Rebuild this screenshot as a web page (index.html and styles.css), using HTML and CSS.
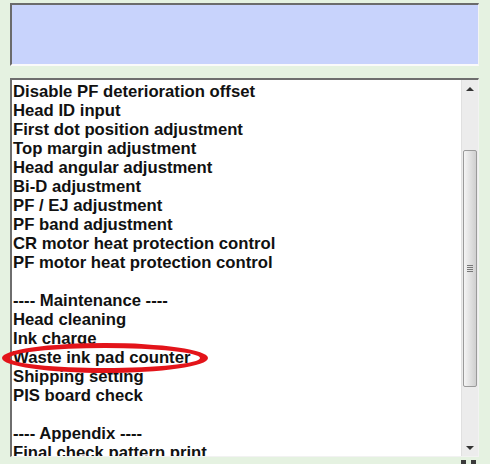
FILE: index.html
```html
<!DOCTYPE html>
<html>
<head>
<meta charset="utf-8">
<link rel="stylesheet" href="styles.css">
</head>
<body>
<div class="panel">
  <div class="status-box"></div>
  <div class="list-box">
    <ul class="items">
      <li>Disable PF deterioration offset</li>
      <li>Head ID input</li>
      <li>First dot position adjustment</li>
      <li>Top margin adjustment</li>
      <li>Head angular adjustment</li>
      <li>Bi-D adjustment</li>
      <li>PF / EJ adjustment</li>
      <li>PF band adjustment</li>
      <li>CR motor heat protection control</li>
      <li>PF motor heat protection control</li>
      <li class="blank">&nbsp;</li>
      <li>---- Maintenance ----</li>
      <li>Head cleaning</li>
      <li>Ink charge</li>
      <li class="marked">Waste ink pad counter<span class="ring"></span></li>
      <li>Shipping setting</li>
      <li>PIS board check</li>
      <li class="blank">&nbsp;</li>
      <li>---- Appendix ----</li>
      <li>Final check pattern print</li>
    </ul>
    <div class="scrollbar">
      <div class="arrow up"></div>
      <div class="track">
        <div class="thumb"><span class="grip"></span></div>
      </div>
      <div class="arrow down"></div>
    </div>
  </div>
  <div class="foot"><span class="nub"></span><span class="nub"></span></div>
</div>
</body>
</html>
```
FILE: styles.css
```css
html, body {
  margin: 0;
  padding: 0;
  background: #e5f2e1;
  width: 490px;
  height: 464px;
  overflow: hidden;
}

.panel {
  padding: 3px 11px 0 10px;
  display: flex;
  flex-direction: column;
}

.status-box {
  height: 59px;
  background: #c8d3fc;
  border-top: 2px solid #6b6b6b;
  border-left: 2px solid #6b6b6b;
  border-right: 1px solid #f4f4f4;
  border-bottom: 2px solid #fafafa;
}

.list-box {
  margin-top: 12px;
  height: 376px;
  background: #ffffff;
  border-top: 2px solid #6e6e6e;
  border-left: 2px solid #6e6e6e;
  border-right: 1px solid #f2f2f2;
  border-bottom: 1px solid #f2f2f2;
  display: flex;
}

.items {
  flex: 1;
  list-style: none;
  margin: 0;
  padding: 2px 0 0 1px;
  font-family: "Liberation Sans", Arial, sans-serif;
  font-weight: bold;
  font-size: 16.7px;
  line-height: 19px;
  color: #111;
  overflow-x: visible;
  overflow-y: clip;
}

.items li {
  white-space: nowrap;
}

.marked {
  position: relative;
}

/* red ellipse drawn around the highlighted entry */
.ring {
  position: absolute;
  left: -11px;
  top: -5px;
  width: 190px;
  height: 20px;
  border-style: solid;
  border-color: #e3141a;
  border-width: 5px 8px;
  border-radius: 50%;
}

.scrollbar {
  width: 16px;
  background: #ececec;
  border-left: 1px solid #e0e0e0;
  display: flex;
  flex-direction: column;
}

.arrow {
  height: 17px;
  display: flex;
  align-items: center;
  justify-content: center;
}

.arrow::before {
  content: "";
  width: 0;
  height: 0;
  border-left: 4px solid transparent;
  border-right: 4px solid transparent;
}

.arrow.up::before {
  border-bottom: 4px solid #333;
}

.arrow.down::before {
  border-top: 4px solid #333;
}

.track {
  flex: 1;
  padding-top: 53px;
  padding-bottom: 52px;
  display: flex;
  flex-direction: column;
}

.thumb {
  flex: 1;
  margin: 0 1px;
  border: 1px solid #9a9a9a;
  border-radius: 2px;
  background: linear-gradient(to right, #f4f4f4, #dedede 60%, #cfcfcf);
  display: flex;
  align-items: center;
  justify-content: center;
}

.grip {
  width: 6px;
  height: 7px;
  background: repeating-linear-gradient(to bottom, #777 0 1px, transparent 1px 2px);
}

.foot {
  display: flex;
  justify-content: flex-end;
  gap: 5px;
  padding: 3px 3px 0 0;
}

.nub {
  width: 5px;
  height: 4px;
  background: #3a3a3a;
}
```
